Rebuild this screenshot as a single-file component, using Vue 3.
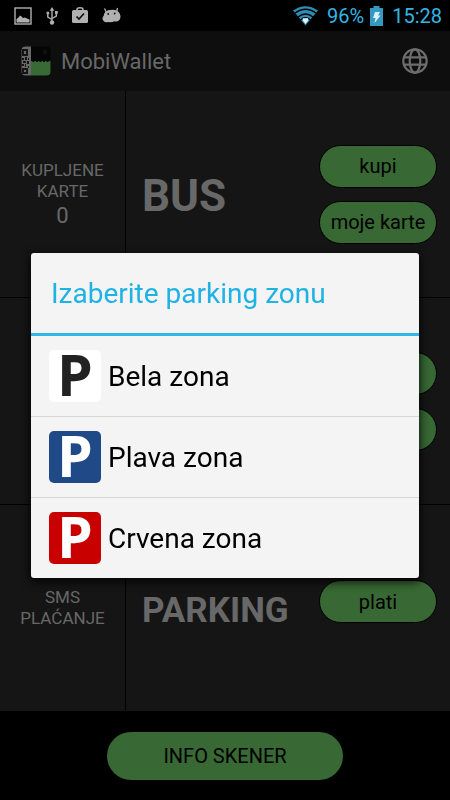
<script setup>
import { ref } from 'vue'

const open = ref(true)

const services = [
  {
    id: 'bus',
    label: ['KUPLJENE', 'KARTE'],
    count: '0',
    name: 'BUS',
    size: 'large',
    actions: ['kupi', 'moje karte'],
  },
  { id: 'middle', label: [], name: '', size: 'large', actions: ['', ''] },
  {
    id: 'parking',
    label: ['SMS', 'PLAĆANJE'],
    name: 'PARKING',
    size: 'medium',
    actions: ['plati'],
  },
]

const zones = [
  { id: 'white', name: 'Bela zona' },
  { id: 'blue', name: 'Plava zona' },
  { id: 'red', name: 'Crvena zona' },
]
</script>

<template>
  <div class="screen">
    <div class="status">
      <div class="notices">
        <svg width="18" height="18" viewBox="0 0 18 18">
          <rect x="1" y="1" width="16" height="16" fill="none" stroke="#b0b0b0" stroke-width="1.400" />
          <path d="M2.500 15.500V12l2-1.500 1.500-2 1.500 1 1.500 1.500 2-.5 2 1 2.500 1v3z" fill="#b0b0b0" />
        </svg>
        <svg width="12" height="18" viewBox="0 0 12 18">
          <path d="M6 3v12M1.800 6.500v3.500L6 12.500M10.300 6v3L6 11.500" fill="none" stroke="#b0b0b0" stroke-width="1.400" />
          <path d="M6 0l2.300 3.800H3.700z" fill="#b0b0b0" />
          <circle cx="6" cy="15.500" r="2.200" fill="#b0b0b0" />
          <circle cx="1.900" cy="6" r="1.500" fill="#b0b0b0" />
          <rect x="9" y="4" width="2.800" height="2.800" fill="#b0b0b0" />
        </svg>
        <svg width="16" height="18" viewBox="0 0 16 18">
          <path d="M5 4V2.500Q5 .8 8 .8T11 2.500V4" fill="none" stroke="#b0b0b0" stroke-width="1.500" />
          <rect x="0" y="3" width="16" height="13" rx="1.500" fill="#b0b0b0" />
          <path d="M4.500 9.500l2.500 2.500 5-5.500" fill="none" stroke="#111" stroke-width="1.700" />
        </svg>
        <svg width="19" height="18" viewBox="0 0 19 18">
          <path d="M2.500 1.500l2 4M15.500 1l-1 4" stroke="#b0b0b0" stroke-width="1.300" />
          <path d="M6 3.300Q9.500 2.300 13 3Q17.500 4 18.500 9Q18.500 13.500 15 14.500Q13.500 14.800 12.500 14.200Q9.500 15.500 6 15Q2.500 16 .8 13Q0 10.500 1.800 8.500Q2 5 6 3.300z" fill="#b0b0b0" />
          <circle cx="6.200" cy="7" r=".9" fill="#111" />
          <circle cx="12.700" cy="6.500" r=".9" fill="#111" />
        </svg>
      </div>
      <div class="system">
        <svg width="25" height="20" viewBox="0 0 25 20">
          <path d="M12.500 19.500L0 4.500Q12.500-4 25 4.500z" fill="#2e8db5" />
          <path d="M1.800 7.300Q12.500-.8 23.200 7.300M5 11Q12.500 5 20 11M7.500 14Q12.500 9.500 17.500 14" fill="none" stroke="#000" stroke-width="1.300" />
          <path d="M9.800 12.200h5.400v2.300l-2.700 3.500-2.700-3.500z" fill="#e4f4fa" />
        </svg>
        <span class="battery-level">96%</span>
        <svg width="13" height="20" viewBox="0 0 13 20">
          <path d="M0 2h3.500V0h6v2H13v18H0z" fill="#3498c0" />
          <path d="M5 6h5L8 9.500h2.500L4.500 17l1-5H3z" fill="#dceff7" />
        </svg>
        <span class="clock">15:28</span>
      </div>
    </div>

    <header class="bar">
      <svg width="30" height="30" viewBox="0 0 30 30">
        <defs>
          <clipPath id="logo-shape"><rect width="29" height="29" x=".5" y=".5" rx="4" /></clipPath>
        </defs>
        <g clip-path="url(#logo-shape)">
          <rect width="30" height="30" fill="#050505" />
          <rect width="10" height="30" fill="#686868" />
          <path d="M10 15h1.500v1h2v-1h1.500v1h2v-1h1.500v1h2v-1h1.500v1h2v-1h1.500v1h2v-1H30v15H10z" fill="#386a35" />
          <circle cx="24" cy="6" r="2.200" fill="#101213" />
          <path d="M1 3h6v7H1zM3 5v3h2V5zM1 12h2v2H1zM4 11h2v3H4zM7 12h1v2H7zM2 15h3v2H2zM6 15h2v3H6zM0 18h3v2H0zM4 18h1v3H4zM1 22h6v6H1zM3 24v2h2v-2zM7 20h1v2H7z" fill="#151515" fill-rule="evenodd" />
        </g>
      </svg>
      <h1 class="app-name">MobiWallet</h1>
      <button class="language" type="button" aria-label="Jezik">
        <svg width="26" height="26" viewBox="0 0 26 26" fill="none" stroke="#6d6d6d" stroke-width="2.200">
          <circle cx="13" cy="13" r="11.700" />
          <ellipse cx="13" cy="13" rx="5.300" ry="11.700" />
          <path d="M2 9.300h22M2 16.700h22" />
        </svg>
      </button>
    </header>

    <main class="services">
      <section v-for="service in services" :key="service.id" class="service">
        <div class="info">
          <span v-for="line in service.label" :key="line">{{ line }}</span>
          <span v-if="service.count" class="count">{{ service.count }}</span>
        </div>
        <div class="body">
          <h2 class="name" :class="service.size">{{ service.name }}</h2>
          <div class="actions" :class="{ single: service.actions.length === 1 }">
            <button v-for="(action, i) in service.actions" :key="i" class="action" type="button">
              {{ action }}
            </button>
          </div>
        </div>
      </section>
    </main>

    <footer class="footer">
      <button class="scanner" type="button">INFO SKENER</button>
    </footer>

    <div v-if="open" class="overlay">
      <div class="dialog" role="dialog" aria-modal="true" aria-labelledby="dialog-title">
        <h2 id="dialog-title" class="dialog-title">Izaberite parking zonu</h2>
        <ul class="zones">
          <li v-for="zone in zones" :key="zone.id" class="zone-item">
            <button class="zone" type="button" @click="open = false">
              <span class="sign" :class="zone.id" aria-hidden="true">P</span>
              <span>{{ zone.name }}</span>
            </button>
          </li>
        </ul>
      </div>
    </div>
  </div>
</template>

<style>
body {
  margin: 0;
  background: #000;
}
</style>

<style scoped>
.screen {
  display: grid;
  grid-template-rows: auto auto 1fr auto;
  min-height: 100vh;
  background: #000;
  color: #686868;
  font-family: Roboto, "Noto Sans", sans-serif;
}

button {
  font-family: inherit;
  cursor: pointer;
}

.status {
  display: flex;
  justify-content: space-between;
  align-items: center;
  height: 31px;
  padding: 0 8px 0 14px;
  box-sizing: border-box;
  color: #33b5e5;
  font-size: 20px;
}

.notices {
  display: flex;
  align-items: center;
  gap: 14px;
}

.system {
  display: flex;
  align-items: center;
}

.battery-level {
  margin: 0 6px 0 9px;
}

.clock {
  margin-left: 9px;
}

.bar {
  display: flex;
  align-items: center;
  height: 60px;
  padding: 0 22px 0 21px;
  box-sizing: border-box;
  background: #0e0e0e;
}

.app-name {
  flex: 1;
  margin: 0 0 0 10px;
  font-size: 22px;
  font-weight: 400;
}

.language {
  display: flex;
  padding: 0;
  border: 0;
  background: none;
}

.services {
  display: grid;
  grid-auto-rows: 1fr;
  gap: 1px;
}

.service {
  display: grid;
  grid-template-columns: 125px 1fr;
  gap: 1px;
}

.info {
  display: flex;
  flex-direction: column;
  align-items: center;
  justify-content: center;
  background: #151515;
  font-size: 17px;
  line-height: 21px;
}

.count {
  font-size: 22px;
  line-height: 27px;
}

.body {
  display: flex;
  align-items: center;
  justify-content: space-between;
  padding: 0 13px 0 16px;
  background: #151515;
}

.name {
  margin: 0;
  padding-top: 4px;
  font-weight: 700;
}

.large {
  font-size: 44px;
}

.medium {
  font-size: 35px;
}

.actions {
  display: flex;
  flex-direction: column;
  gap: 13px;
}

.single {
  padding-bottom: 13px;
}

.action {
  width: 118px;
  height: 43px;
  padding: 0;
  border: 1px solid #000;
  border-radius: 22px;
  background: #386834;
  color: #000;
  font-size: 20px;
}

.footer {
  display: flex;
  align-items: center;
  justify-content: center;
  height: 89px;
}

.scanner {
  width: 236px;
  height: 48px;
  padding: 0;
  border: 0;
  border-radius: 24px;
  background: #386834;
  color: #000;
  font-size: 20px;
}

.overlay {
  position: fixed;
  inset: 31px 0 0;
  display: flex;
  align-items: center;
  padding: 0 31px;
}

.dialog {
  flex: 1;
  overflow: hidden;
  border-radius: 3px;
  background: #f4f4f4;
  box-shadow: 0 3px 10px 1px rgba(0, 0, 0, 0.8);
}

.dialog-title {
  margin: 0;
  padding: 2px 20px 0;
  border-bottom: 3px solid #33b5e5;
  color: #1fb2e5;
  font-size: 28px;
  font-weight: 400;
  line-height: 78px;
}

.zones {
  margin: 0;
  padding: 0;
  list-style: none;
}

.zone-item + .zone-item {
  border-top: 1px solid #d6d6d6;
}

.zone {
  display: flex;
  align-items: center;
  gap: 7px;
  width: 100%;
  height: 80px;
  padding: 0 18px;
  border: 0;
  background: none;
  color: #000;
  font-size: 28px;
}

.sign {
  width: 52px;
  height: 52px;
  border-radius: 5px;
  color: #fff;
  font-family: "Open Sans", "Noto Sans", sans-serif;
  font-size: 57px;
  font-weight: 700;
  line-height: 48px;
  text-align: center;
}

.white {
  background: #fff;
  color: #222;
}

.blue {
  background: #204a87;
}

.red {
  background: #c80000;
}
</style>
